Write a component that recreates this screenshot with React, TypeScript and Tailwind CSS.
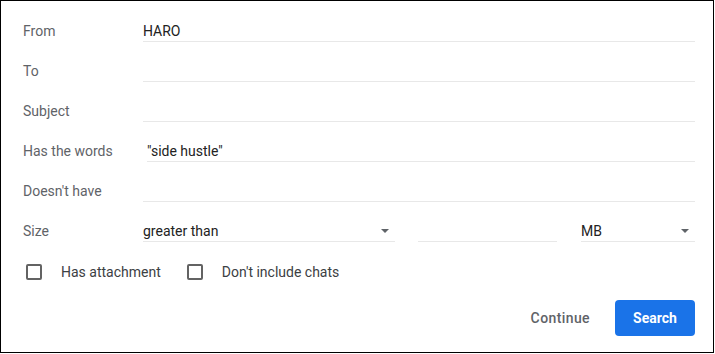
import React from 'react';

const font = { fontFamily: 'Roboto, "Liberation Sans", sans-serif' };

function Caret() {
  return (
    <svg width="8" height="4" viewBox="0 0 8 4" className="shrink-0">
      <path d="M0 0h8L4 4z" fill="#5f6368" />
    </svg>
  );
}

function Row({ label, children }: { label: string; children?: React.ReactNode }) {
  return (
    <div className="flex h-10 items-end">
      <div className="w-[120px] shrink-0 text-[14px] leading-5 text-[#5f6368] pb-px">{label}</div>
      {children}
    </div>
  );
}

function Field({ value, className = '' }: { value?: string; className?: string }) {
  return (
    <div className={`flex-1 border-b border-[#e8e8e8] text-[14px] leading-5 text-[#222222] h-[21px] ${className}`}>
      {value}
    </div>
  );
}

function Checkbox() {
  return <div className="w-4 h-4 shrink-0 rounded-[2px] border-2 border-[#636363]" />;
}

export default function App() {
  return (
    <div
      className="w-[714px] h-[353px] border border-black bg-white pt-px pl-[22px] pr-[18px] flex flex-col"
      style={font}
    >
      <Row label="From">
        <Field value="HARO" />
      </Row>
      <Row label="To">
        <Field />
      </Row>
      <Row label="Subject">
        <Field />
      </Row>
      <Row label="Has the words">
        <Field value={'"side hustle"'} className="ml-1" />
      </Row>
      <Row label="Doesn't have">
        <Field />
      </Row>
      <Row label="Size">
        <div className="w-[252px] h-[21px] flex items-center justify-between border-b border-[#e8e8e8] text-[14px] leading-5 text-[#222222] pr-[6px]">
          <span>greater than</span>
          <Caret />
        </div>
        <div className="ml-[23px] w-[139px] h-[21px] border-b border-[#e8e8e8]" />
        <div className="ml-[24px] flex-1 h-[21px] flex items-center justify-between border-b border-[#e8e8e8] text-[14px] leading-5 text-[#222222] pr-[6px]">
          <span>MB</span>
          <Caret />
        </div>
      </Row>

      <div className="mt-[10px] h-10 flex items-center text-[14px] text-[#3c4043]">
        <div className="ml-[3px]">
          <Checkbox />
        </div>
        <span className="ml-[19px]">Has attachment</span>
        <div className="ml-[26px]">
          <Checkbox />
        </div>
        <span className="ml-[19px]">Don't include chats</span>
      </div>

      <div className="mt-2 flex justify-end items-center">
        <button className="h-9 pl-4 pr-[25px] text-[14px] font-medium tracking-[0.4px] text-[#5f6368]">
          Continue
        </button>
        <button className="h-9 w-[80px] rounded-[4px] bg-[#1a73e8] text-white text-[14px] font-bold">
          Search
        </button>
      </div>
    </div>
  );
}
